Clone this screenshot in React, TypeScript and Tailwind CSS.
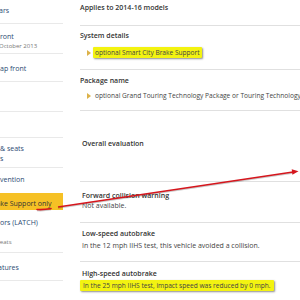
const sideRow = 'border-b border-[#e9e9e9]'
const sideLink = 'block whitespace-nowrap text-[7px] leading-[10px] text-[#2b4a73]'
const sideSub = 'block whitespace-nowrap text-[6px] leading-[8px] text-[#777]'

const sectionBorder = 'border-b border-[#e0e0e0]'
const title = 'whitespace-nowrap text-[7px] font-semibold leading-[10px] text-[#333]'
const body = 'whitespace-nowrap text-[7px] leading-[10px] text-[#444]'

const Bullet = () => (
  <svg width="4" height="6" viewBox="0 0 4 6" className="shrink-0">
    <polygon points="0,0 4,3 0,6" fill="#dcb24a" />
  </svg>
)

const Sidebar = () => (
  <div className="flex w-[63px] shrink-0 flex-col">
    <div className={`h-[24px] pt-[6px] ${sideRow}`}>
      <span className={`${sideLink} ml-[-1px]`}>ars</span>
    </div>
    <div className={`h-[30px] pt-[8px] ${sideRow}`}>
      <span className={`${sideLink} leading-[8px]`}>ront</span>
      <span className={`${sideSub} ml-[-1px]`}>October 2013</span>
    </div>
    <div className={`h-[28px] pt-[10px] ${sideRow}`}>
      <span className={sideLink}>ap front</span>
    </div>
    <div className={`h-[30px] ${sideRow}`} />
    <div className={`h-[26px] ${sideRow}`} />
    <div className={`h-[30px] pt-[6px] ${sideRow}`}>
      <span className={`${sideLink} leading-[8px]`}>&amp; seats</span>
      <span className={`${sideLink} leading-[8px]`}>s</span>
    </div>
    <div className="h-[25px] pt-[7px]">
      <span className={sideLink}>vention</span>
    </div>
    <div className="h-[17px] overflow-hidden bg-[#f6c125] pt-[6px]">
      <span className={`${sideLink} ml-[-11px] text-[#333]`}>Brake Support only</span>
    </div>
    <div className={`h-[43px] pt-[8px] ${sideRow}`}>
      <span className={sideLink}>ors (LATCH)</span>
      <span className={`${sideSub} mt-[10px] ml-[-3px]`}>seats</span>
    </div>
    <div className={`h-[28px] pt-[10px] ${sideRow}`}>
      <span className={`${sideLink} ml-[-2px]`}>atures</span>
    </div>
  </div>
)

const Main = () => (
  <div className="ml-[17px] flex min-w-0 flex-1 flex-col">
    <div className={`h-[26px] pt-[3px] ${sectionBorder}`}>
      <p className={title}>Applies to 2014-16 models</p>
    </div>
    <div className={`h-[44px] pt-[5px] ${sectionBorder}`}>
      <p className={title}>System details</p>
      <div className="mt-[6px] ml-[7px] flex items-center gap-[2px]">
        <Bullet />
        <span className="h-[11px] whitespace-nowrap rounded-[1px] bg-[#f3f311] px-[2px] text-[6.6px] leading-[11px] text-[#444] shadow-[1px_1px_2px_rgba(0,0,0,0.45)]">
          optional Smart City Brake Support
        </span>
      </div>
    </div>
    <div className={`h-[41px] pt-[6px] ${sectionBorder}`}>
      <p className={title}>Package name</p>
      <div className="mt-[5px] ml-[7px] flex items-center gap-[4px]">
        <Bullet />
        <span className="whitespace-nowrap text-[6.6px] leading-[10px] text-[#444]">
          optional Grand Touring Technology Package or Touring Technology Package
        </span>
      </div>
    </div>
    <div className={`h-[71px] pt-[28px] ${sectionBorder}`}>
      <p className={`${title} ml-[2px]`}>Overall evaluation</p>
    </div>
    <div className={`h-[41px] pt-[9px] ${sectionBorder}`}>
      <p className={`${title} ml-[2px]`}>Forward collision warning</p>
      <p className={`${body} ml-[2px]`}>Not available.</p>
    </div>
    <div className={`h-[39px] pt-[6px] ${sectionBorder}`}>
      <p className={`${title} ml-[2px]`}>Low-speed autobrake</p>
      <p className={`${body} mt-[2px] ml-[2px]`}>In the 12 mph IIHS test, this vehicle avoided a collision.</p>
    </div>
    <div className="pt-[7px]">
      <p className={`${title} ml-[2px]`}>High-speed autobrake</p>
      <div className="mt-[1px] flex">
        <span className="h-[11px] whitespace-nowrap rounded-[1px] bg-[#f3f311] px-[3px] text-[6.6px] leading-[11px] text-[#444] shadow-[1px_1px_2px_rgba(0,0,0,0.45)]">
          In the 25 mph IIHS test, impact speed was reduced by 0 mph.
        </span>
      </div>
    </div>
  </div>
)

// red annotation drawn over the page
const Arrow = () => (
  <svg className="pointer-events-none absolute inset-0" width="300" height="300" viewBox="0 0 300 300">
    <path d="M37 210.5 Q44 211 51 209.5" stroke="rgba(0,0,0,0.2)" strokeWidth="1.6" fill="none" />
    <path d="M37 209.5 Q44 210 51 208.5" stroke="#d5161d" strokeWidth="1.6" fill="none" strokeLinecap="round" />
    <line x1="58" y1="208" x2="293" y2="173" stroke="rgba(0,0,0,0.2)" strokeWidth="1.6" />
    <line x1="58" y1="207" x2="293" y2="172" stroke="#d5161d" strokeWidth="1.6" />
    <polygon points="298.5,171.2 292.4,174.7 291.7,169.2" fill="#d5161d" />
  </svg>
)

export default function App() {
  return (
    <div className="relative flex h-[300px] w-[300px] overflow-hidden bg-white font-['Open_Sans',sans-serif]">
      <Sidebar />
      <Main />
      <Arrow />
    </div>
  )
}
